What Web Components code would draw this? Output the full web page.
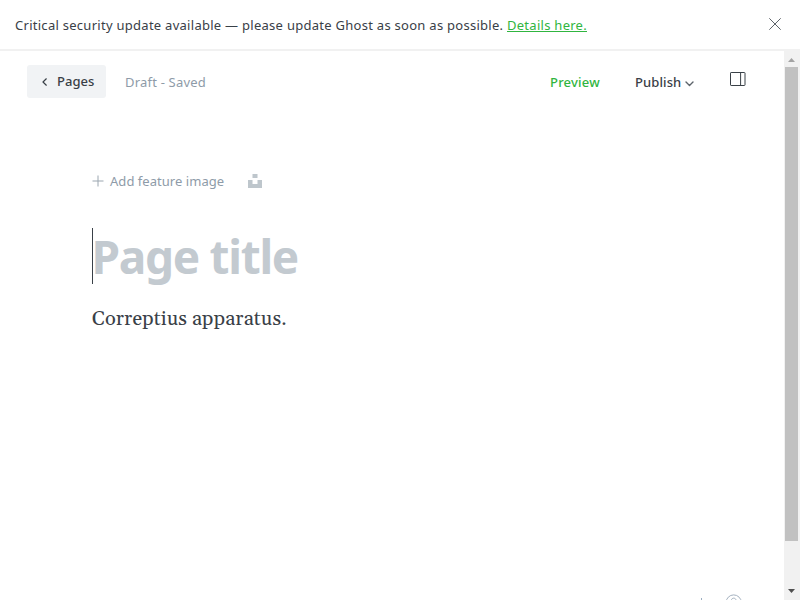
<!DOCTYPE html>
<html lang="en">
<head>
<meta charset="utf-8">
<title>Page editor</title>
<style>
html, body { margin: 0; height: 100%; overflow: hidden; background: #fff; }
body { font-family: "Noto Sans", "Open Sans", sans-serif; font-size: 13px; color: #394047; }
</style>
</head>
<body>
<editor-app></editor-app>
<script>
const define = (name, html) => customElements.define(name, class extends HTMLElement {
  constructor() {
    super();
    const t = document.createElement('template');
    t.innerHTML = html;
    this.attachShadow({ mode: 'open' }).append(t.content.cloneNode(true));
  }
});

define('alert-banner', `
<style>
:host { display: flex; box-sizing: border-box; height: 51px; padding: 0 18px 1px 15px; border-bottom: 2px solid #f1f1f1; align-items: center; justify-content: space-between; background: #fff; }
.msg { white-space: nowrap; line-height: 20px; letter-spacing: .275px; padding-top: 1px; }
svg { display: block; width: 14px; height: 14px; }
</style>
<span class="msg"><slot></slot></span>
<svg viewBox="0 0 14 14" fill="none" stroke="#5d6369" stroke-width="1"><path d="M1.3 1.3 12.7 12.7M12.7 1.3 1.3 12.7"/></svg>`);

define('text-link', `
<style>
:host { color: #30b540; text-decoration: underline; text-decoration-thickness: 1px; text-underline-offset: 1px; }
</style><slot></slot>`);

define('back-button', `
<style>
:host { display: flex; box-sizing: border-box; width: 79px; height: 33px; padding: 0 0 1px 15px; gap: 10px; align-items: center; border-radius: 3px; background: #f1f3f5; font-weight: 500; line-height: 20px; letter-spacing: .05px; }
svg { width: 5px; height: 8px; margin-top: 1px; }
</style>
<svg viewBox="0 0 5 8" fill="none" stroke="#394047" stroke-width="1.2" stroke-linecap="round" stroke-linejoin="round"><path d="M4.3.8 1 4l3.3 3.2"/></svg>
<slot></slot>`);

define('editor-header', `
<style>
:host { display: flex; height: 33px; padding: 14px 38px 0 27px; align-items: center; }
.status { margin-left: 19px; padding-top: 1px; color: #8e9ba8; letter-spacing: .2px; }
.preview { margin-left: auto; padding-top: 1px; color: #30b540; font-weight: 500; letter-spacing: .2px; width: 85px; }
.publish { display: flex; padding-top: 1px; align-items: center; font-weight: 500; letter-spacing: .1px; width: 95px; gap: 4px; }
.chev { width: 9px; height: 6px; margin-top: 3px; }
.panel { width: 16px; height: 14px; margin-bottom: 5px; display: block; }
</style>
<back-button>Pages</back-button>
<span class="status">Draft - Saved</span>
<span class="preview">Preview</span>
<span class="publish">Publish<svg class="chev" viewBox="0 0 9 6" fill="none" stroke="#5d646b" stroke-width="1.4" stroke-linecap="round" stroke-linejoin="round"><path d="M1 1l3.5 3.5L8 1"/></svg></span>
<svg class="panel" viewBox="0 0 16 14" fill="none" stroke="#394047"><rect x=".5" y=".5" width="14.5" height="13" rx=".6"/><path d="M10.6 .5v13"/></svg>`);

define('feature-image-bar', `
<style>
:host { display: flex; align-items: center; height: 20px; color: #8e9ba8; letter-spacing: .04px; }
.plus { width: 12px; height: 12px; margin-right: 6px; }
.label { width: 138px; white-space: nowrap; }
.un { width: 14px; height: 14px; }
</style>
<svg class="plus" viewBox="0 0 12 12" stroke="#9ba6b0" stroke-width="1"><path d="M6 .5v11M.5 6h11"/></svg>
<span class="label">Add feature image</span>
<svg class="un" viewBox="0 0 14 14" fill="#bec6cc"><path d="M4.5 0h5v4h-5zM0 6h4.5v4h5V6H14v8H0z"/></svg>`);

define('title-field', `
<style>
:host { display: flex; height: 56px; margin-top: 37px; align-items: center; border-left: 1px solid #394047; }
span { font-size: 46px; line-height: 56px; font-weight: 700; letter-spacing: -1.3px; margin-left: -1.5px; color: #c3cad0; white-space: nowrap; }
</style><span><slot></slot></span>`);

define('body-text', `
<style>
:host { display: block; margin-top: 19px; font: 20px/32px Gelasio, Georgia, "Liberation Serif", serif; letter-spacing: .1px; color: #394047; }
</style><slot></slot>`);

define('editor-footer', `
<style>
:host { display: flex; margin-top: auto; height: 6px; overflow: hidden; padding-left: 701px; gap: 23px; }
i { width: 1px; height: 2px; margin-top: 4px; background: #9badc0; }
svg { width: 18px; height: 18px; flex: none; }
</style><i></i>
<svg viewBox="0 0 18 18" fill="none" stroke="#a4b1bf"><circle cx="8.7" cy="8.5" r="7.6"/><path d="M6.4 6.4c0-3 4.6-3 4.6 0 0 1.8-2.3 1.8-2.3 3.6"/></svg>`);

define('scroll-bar', `
<style>
:host { display: flex; flex-direction: column; box-sizing: border-box; width: 16px; flex: none; background: #f1f1f1; align-items: center; }
.thumb { width: 13px; height: 474px; background: #c1c1c1; margin-right: 1px; }
svg { display: block; width: 16px; height: 16px; }
.down { margin-top: auto; height: 18px; }
</style>
<svg viewBox="0 0 16 16" fill="#a3a3a3"><path d="M4 11h7L7.5 7z"/></svg>
<div class="thumb"></div>
<svg class="down" viewBox="0 0 16 18" fill="#505050"><path d="M4 7h7L7.5 11z"/></svg>`);

define('editor-app', `
<style>
:host { display: flex; flex-direction: column; width: 800px; height: 600px; }
.view { display: flex; flex: 1; min-height: 0; }
.page { display: flex; flex-direction: column; flex: 1; min-width: 0; }
.canvas { padding: 73px 92px 0; }
</style>
<alert-banner>Critical security update available — please update Ghost as soon as possible. <text-link>Details here.</text-link></alert-banner>
<div class="view">
  <div class="page">
    <editor-header></editor-header>
    <div class="canvas">
      <feature-image-bar></feature-image-bar>
      <title-field>Page title</title-field>
      <body-text>Correptius apparatus.</body-text>
    </div>
    <editor-footer></editor-footer>
  </div>
  <scroll-bar></scroll-bar>
</div>`);
</script>
</body>
</html>
